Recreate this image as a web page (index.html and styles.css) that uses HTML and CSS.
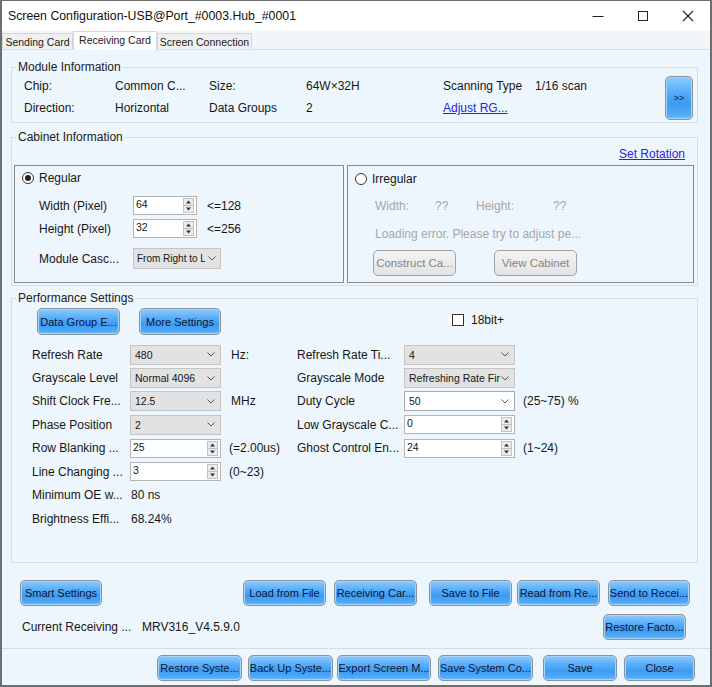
FILE: index.html
```html
<!DOCTYPE html>
<html>
<head>
<meta charset="utf-8">
<title>Screen Configuration</title>
<link rel="stylesheet" href="styles.css">
</head>
<body>
<div class="window">
  <div class="titlebar">
    <span class="title">Screen Configuration-USB@Port_#0003.Hub_#0001</span>
    <div class="controls">
      <div class="ctl"><svg width="12" height="12" viewBox="0 0 12 12"><line x1="0.5" y1="6.5" x2="11.5" y2="6.5" stroke="#222" stroke-width="1"/></svg></div>
      <div class="ctl"><svg width="12" height="12" viewBox="0 0 12 12"><rect x="1.5" y="1.5" width="9" height="9" fill="none" stroke="#222" stroke-width="1"/></svg></div>
      <div class="ctl"><svg width="12" height="12" viewBox="0 0 12 12"><path d="M1 1 L11 11 M11 1 L1 11" stroke="#222" stroke-width="1.1"/></svg></div>
    </div>
  </div>
  <div class="tabs">
    <div class="tab t1">Sending Card</div>
    <div class="tab active t2">Receiving Card</div>
    <div class="tab t3">Screen Connection</div>
  </div>
  <div class="page">
    <fieldset class="group module">
      <legend>Module Information</legend>
      <div class="module-body">
        <div class="mgrid">
          <span>Chip:</span><span>Common C...</span><span>Size:</span><span>64W×32H</span><span>Scanning Type</span><span>1/16 scan</span>
          <span>Direction:</span><span>Horizontal</span><span>Data Groups</span><span>2</span><span><a class="link">Adjust RG...</a></span><span></span>
        </div>
        <button class="btn more">&gt;&gt;</button>
      </div>
    </fieldset>

    <fieldset class="group cabinet">
      <legend>Cabinet Information</legend>
      <div class="rot-row"><a class="link">Set Rotation</a></div>
      <div class="cab-boxes">
        <div class="box regular">
          <div class="radio-row"><span class="radio on"><span class="dot"></span></span><span>Regular</span></div>
          <div class="field-row r1"><span class="flabel">Width (Pixel)</span><div class="spin w64"><span class="val">64</span><span class="spinbtn"><svg width="11" height="15" viewBox="0 0 11 15"><rect x="0.5" y="0.5" width="10" height="14" fill="#ececec" stroke="#c4c4c4"/><line x1="1" y1="7.5" x2="10" y2="7.5" stroke="#bdbdbd"/><path d="M3 5.5 L5.5 2.5 L8 5.5 Z" fill="#333"/><path d="M3 9.5 L5.5 12.5 L8 9.5 Z" fill="#333"/></svg></span></div><span class="hint">&lt;=128</span></div>
          <div class="field-row r2"><span class="flabel">Height (Pixel)</span><div class="spin w64"><span class="val">32</span><span class="spinbtn"><svg width="11" height="15" viewBox="0 0 11 15"><rect x="0.5" y="0.5" width="10" height="14" fill="#ececec" stroke="#c4c4c4"/><line x1="1" y1="7.5" x2="10" y2="7.5" stroke="#bdbdbd"/><path d="M3 5.5 L5.5 2.5 L8 5.5 Z" fill="#333"/><path d="M3 9.5 L5.5 12.5 L8 9.5 Z" fill="#333"/></svg></span></div><span class="hint">&lt;=256</span></div>
          <div class="field-row r3"><span class="flabel">Module Casc...</span><div class="combo casc"><span class="val">From Right to L</span><svg class="chev" width="8" height="5" viewBox="0 0 8 5"><polyline points="0.5,0.5 4,4 7.5,0.5" fill="none" stroke="#555" stroke-width="1"/></svg></div></div>
        </div>
        <div class="box irregular">
          <div class="radio-row"><span class="radio"></span><span>Irregular</span></div>
          <div class="info-row"><span class="c1">Width:</span><span class="c2">??</span><span class="c3">Height:</span><span>??</span></div>
          <div class="load-row">Loading error. Please try to adjust pe...</div>
          <div class="dis-row"><button class="btn dis">Construct Ca...</button><button class="btn dis">View Cabinet</button></div>
        </div>
      </div>
    </fieldset>

    <fieldset class="group perf">
      <legend>Performance Settings</legend>
      <div class="perf-top">
        <button class="btn b-dg">Data Group E...</button>
        <button class="btn b-ms">More Settings</button>
        <label class="check"><span class="box-c"></span><span>18bit+</span></label>
      </div>
      <div class="pgrid">
        <span>Refresh Rate</span>
        <div class="combo"><span class="val">480</span><svg class="chev" width="8" height="5" viewBox="0 0 8 5"><polyline points="0.5,0.5 4,4 7.5,0.5" fill="none" stroke="#555" stroke-width="1"/></svg></div>
        <span class="unit">Hz:</span>
        <span>Refresh Rate Ti...</span>
        <div class="combo"><span class="val">4</span><svg class="chev" width="8" height="5" viewBox="0 0 8 5"><polyline points="0.5,0.5 4,4 7.5,0.5" fill="none" stroke="#555" stroke-width="1"/></svg></div>
        <span class="unit r"></span>

        <span>Grayscale Level</span>
        <div class="combo"><span class="val">Normal 4096</span><svg class="chev" width="8" height="5" viewBox="0 0 8 5"><polyline points="0.5,0.5 4,4 7.5,0.5" fill="none" stroke="#555" stroke-width="1"/></svg></div>
        <span class="unit"></span>
        <span>Grayscale Mode</span>
        <div class="combo"><span class="val">Refreshing Rate Fir</span><svg class="chev" width="8" height="5" viewBox="0 0 8 5"><polyline points="0.5,0.5 4,4 7.5,0.5" fill="none" stroke="#555" stroke-width="1"/></svg></div>
        <span class="unit r"></span>

        <span>Shift Clock Fre...</span>
        <div class="combo"><span class="val">12.5</span><svg class="chev" width="8" height="5" viewBox="0 0 8 5"><polyline points="0.5,0.5 4,4 7.5,0.5" fill="none" stroke="#555" stroke-width="1"/></svg></div>
        <span class="unit">MHz</span>
        <span>Duty Cycle</span>
        <div class="combo white"><span class="val">50</span><svg class="chev" width="8" height="5" viewBox="0 0 8 5"><polyline points="0.5,0.5 4,4 7.5,0.5" fill="none" stroke="#555" stroke-width="1"/></svg></div>
        <span class="unit r">(25~75) %</span>

        <span>Phase Position</span>
        <div class="combo"><span class="val">2</span><svg class="chev" width="8" height="5" viewBox="0 0 8 5"><polyline points="0.5,0.5 4,4 7.5,0.5" fill="none" stroke="#555" stroke-width="1"/></svg></div>
        <span class="unit"></span>
        <span>Low Grayscale C...</span>
        <div class="spin"><span class="val">0</span><span class="spinbtn"><svg width="11" height="15" viewBox="0 0 11 15"><rect x="0.5" y="0.5" width="10" height="14" fill="#ececec" stroke="#c4c4c4"/><line x1="1" y1="7.5" x2="10" y2="7.5" stroke="#bdbdbd"/><path d="M3 5.5 L5.5 2.5 L8 5.5 Z" fill="#333"/><path d="M3 9.5 L5.5 12.5 L8 9.5 Z" fill="#333"/></svg></span></div>
        <span class="unit r"></span>

        <span>Row Blanking ...</span>
        <div class="spin"><span class="val">25</span><span class="spinbtn"><svg width="11" height="15" viewBox="0 0 11 15"><rect x="0.5" y="0.5" width="10" height="14" fill="#ececec" stroke="#c4c4c4"/><line x1="1" y1="7.5" x2="10" y2="7.5" stroke="#bdbdbd"/><path d="M3 5.5 L5.5 2.5 L8 5.5 Z" fill="#333"/><path d="M3 9.5 L5.5 12.5 L8 9.5 Z" fill="#333"/></svg></span></div>
        <span class="unit s">(=2.00us)</span>
        <span>Ghost Control En...</span>
        <div class="spin"><span class="val">24</span><span class="spinbtn"><svg width="11" height="15" viewBox="0 0 11 15"><rect x="0.5" y="0.5" width="10" height="14" fill="#ececec" stroke="#c4c4c4"/><line x1="1" y1="7.5" x2="10" y2="7.5" stroke="#bdbdbd"/><path d="M3 5.5 L5.5 2.5 L8 5.5 Z" fill="#333"/><path d="M3 9.5 L5.5 12.5 L8 9.5 Z" fill="#333"/></svg></span></div>
        <span class="unit r">(1~24)</span>

        <span>Line Changing ...</span>
        <div class="spin lc"><span class="val">3</span><span class="spinbtn"><svg width="11" height="15" viewBox="0 0 11 15"><rect x="0.5" y="0.5" width="10" height="14" fill="#ececec" stroke="#c4c4c4"/><line x1="1" y1="7.5" x2="10" y2="7.5" stroke="#bdbdbd"/><path d="M3 5.5 L5.5 2.5 L8 5.5 Z" fill="#333"/><path d="M3 9.5 L5.5 12.5 L8 9.5 Z" fill="#333"/></svg></span></div>
        <span class="unit s">(0~23)</span>
        <span></span><span></span><span></span>
      </div>
      <div class="prow"><span class="plabel">Minimum OE w...</span><span>80 ns</span></div>
      <div class="prow"><span class="plabel">Brightness Effi...</span><span>68.24%</span></div>
    </fieldset>

    <div class="actions">
      <div class="arow1">
        <button class="btn a-smart">Smart Settings</button>
        <button class="btn a-load">Load from File</button>
        <button class="btn a-rc">Receiving Car...</button>
        <button class="btn a-save">Save to File</button>
        <button class="btn a-read">Read from Re...</button>
        <button class="btn a-send">Send to Recei...</button>
      </div>
      <div class="arow2">
        <span class="cur-label">Current Receiving ...</span>
        <span>MRV316_V4.5.9.0</span>
        <button class="btn a-rf">Restore Facto...</button>
      </div>
    </div>
    <div class="sep"></div>
    <div class="footer">
      <button class="btn f1">Restore Syste...</button>
      <button class="btn f2">Back Up Syste...</button>
      <button class="btn f3">Export Screen M...</button>
      <button class="btn f4">Save System Co...</button>
      <button class="btn f5">Save</button>
      <button class="btn f6">Close</button>
    </div>
  </div>
</div>
</body>
</html>
```
FILE: styles.css
```css
* { box-sizing: border-box; }
html, body { margin: 0; padding: 0; }
body {
  width: 712px; height: 687px; overflow: hidden;
  font-family: "Liberation Sans", Arial, sans-serif;
  font-size: 12px; color: #161616; background: #fff;
}
.window {
  width: 712px; height: 687px;
  border: 2px solid #6e6e6e; border-top-width: 1px;
  display: flex; flex-direction: column;
  background: #eef6fd;
}
.titlebar {
  height: 30px; flex: none; background: #fff;
  display: flex; align-items: center; padding-left: 6px;
}
.title { flex: 1; font-size: 12.3px; color: #111; }
.controls { display: flex; }
.ctl { width: 45px; height: 30px; display: flex; align-items: center; justify-content: center; }

.tabs {
  height: 19px; flex: none; display: flex; align-items: flex-end;
  border-bottom: 1px solid #d9dee3; background: #f1f6fb;
}
.tab {
  height: 16px; background: #f0f0f0; border: 1px solid #d6d6d6; border-bottom: none;
  font-size: 10.5px; color: #1a1a1a; display: flex; align-items: center; justify-content: center;
}
.tab.t1 { width: 71px; }
.tab.t2 { width: 84px; }
.tab.t3 { width: 95px; }
.tab.active { height: 19px; margin-bottom: -1px; background: #fff; align-items: flex-start; padding-top: 2px; }

.page { flex: 1; padding: 10px 12px 0 9px; overflow: hidden; }

.group { margin: 0; padding: 0; border: 1px solid #d6dde4; min-width: 0; }
.group legend { margin-left: 4px; padding: 0 2px; line-height: 14px; font-size: 12px; color: #202020; }

.link { color: #2626d9; text-decoration: underline; }

/* module */
.module-body { display: flex; padding: 0 4px 2px 12px; }
.mgrid {
  flex: 1; display: grid; padding-top: 1px;
  grid-template-columns: 91px 94px 97px 137px 92px 1fr;
  grid-auto-rows: 22px; align-items: center;
}
.btn {
  height: 26px; padding: 0; border: 1px solid #8c9299; border-radius: 5px;
  background: linear-gradient(#8ccbff 0%, #5aaefa 35%, #3d9bf3 62%, #4fa9f8 88%, #74bdfd 100%);
  box-shadow: inset 0 0 0 1px #a7d4fb;
  font-family: "Liberation Sans", Arial, sans-serif; font-size: 11px; color: #0b1635;
  white-space: nowrap; overflow: hidden; flex: none;
}
.btn.more { width: 28px; height: 44px; margin-top: 2px; font-size: 9px; }
.btn.dis {
  background: linear-gradient(#f3f3f3, #e4e4e4); box-shadow: none;
  border-color: #a2a2a2; color: #858585; width: 83px; font-size: 11.5px;
}

/* cabinet */
.cabinet { margin-top: 7px; }
.rot-row { height: 20px; display: flex; justify-content: flex-end; align-items: center; padding-right: 12px; }
.cab-boxes { display: flex; gap: 3px; padding: 1px 2px 2px 2px; }
.box { height: 118px; border: 1px solid #8a8a8a; }
.regular { width: 330px; }
.irregular { width: 347px; }
.radio-row { height: 20px; display: flex; align-items: center; gap: 5px; padding-left: 7px; margin-top: 2px; }
.irregular .radio-row { margin-top: 3px; }
.radio {
  width: 12px; height: 12px; border: 1px solid #333; border-radius: 50%; background: #fff;
  display: flex; align-items: center; justify-content: center;
}
.radio .dot { width: 6px; height: 6px; border-radius: 50%; background: #222; }
.field-row { display: flex; align-items: center; height: 19px; padding-left: 24px; }
.field-row.r1 { margin-top: 8px; }
.field-row.r2 { margin-top: 4px; }
.field-row.r3 { margin-top: 10px; height: 21px; }
.flabel { width: 94px; }
.hint { margin-left: 10px; }

.spin {
  height: 19px; border: 1px solid #b4b4b4; background: #fff;
  display: flex; align-items: center; padding-left: 2px; font-size: 10.5px;
}
.spin.w64 { width: 64px; }
.spin .val { flex: 1; align-self: flex-start; padding-top: 1px; }
.spinbtn { display: flex; margin-right: 2px; }

.combo {
  height: 20px; border: 1px solid #c4c4c4; background: #e2e2e2;
  display: flex; align-items: center; padding-left: 4px; font-size: 10.5px; overflow: hidden;
}
.combo .val { white-space: nowrap; overflow: hidden; }
.combo .chev { margin-left: auto; margin-right: 5px; flex: none; }
.combo.white { background: #fff; border-color: #a9a9a9; }
.combo.casc { width: 88px; height: 21px; padding-left: 3px; font-size: 10px; }
.combo.casc .chev { margin-left: 3px; margin-right: 4px; }

.info-row { display: flex; height: 18px; align-items: center; margin-top: 8px; padding-left: 27px; color: #a6a6a6; }
.info-row .c1 { width: 60px; }
.info-row .c2 { width: 41px; }
.info-row .c3 { width: 77px; }
.load-row { height: 18px; display: flex; align-items: center; margin-top: 10px; padding-left: 27px; color: #a6a6a6; }
.dis-row { display: flex; gap: 38px; margin-top: 7px; padding-left: 25px; }

/* performance */
.perf { margin-top: 5px; padding-bottom: 31px; }
.perf-top { display: flex; align-items: center; height: 27px; margin-top: 3px; padding-left: 25px; }
.b-dg { width: 83px; height: 27px; }
.b-ms { width: 82px; height: 27px; margin-left: 19px; }
.check { display: flex; align-items: center; gap: 7px; margin-left: 231px; margin-top: -4px; }
.box-c { width: 12px; height: 12px; border: 1px solid #333; background: #fff; }

.pgrid {
  display: grid; margin-top: 8px; padding-left: 20px;
  grid-template-columns: 98px 91px 76px 107px 111px 1fr;
  grid-auto-rows: 23.4px; align-items: center;
}
.unit { padding-left: 10px; }
.unit.s { padding-left: 8px; }
.unit.r { padding-left: 8px; }
.prow { display: flex; align-items: center; height: 24px; padding-left: 20px; }
.plabel { width: 99px; }

/* actions */
.actions { margin-top: 17px; padding: 0 12px 0 9px; }
.arow1 { display: flex; height: 26px; }
.a-smart { width: 82px; }
.a-load { width: 83px; margin-left: 141px; }
.a-rc { width: 83px; margin-left: 8px; }
.a-save { width: 83px; margin-left: 12px; }
.a-read { width: 83px; margin-left: 5px; }
.a-send { width: 82px; margin-left: 8px; }
.arow2 { display: flex; align-items: center; height: 26px; margin-top: 8px; }
.cur-label { width: 122px; padding-left: 2px; }
.a-rf { width: 83px; margin-left: auto; }

.sep { height: 1px; background: #d6dce2; margin: 8px -12px 0 -9px; }
.footer { display: flex; justify-content: flex-end; height: 26px; margin-top: 6px; padding-right: 3px; }
.f1 { width: 85px; }
.f2 { width: 85px; margin-left: 6px; }
.f3 { width: 94px; margin-left: 4px; }
.f4 { width: 95px; margin-left: 7px; }
.f5 { width: 74px; margin-left: 10px; }
.f6 { width: 71px; margin-left: 7px; }
```
